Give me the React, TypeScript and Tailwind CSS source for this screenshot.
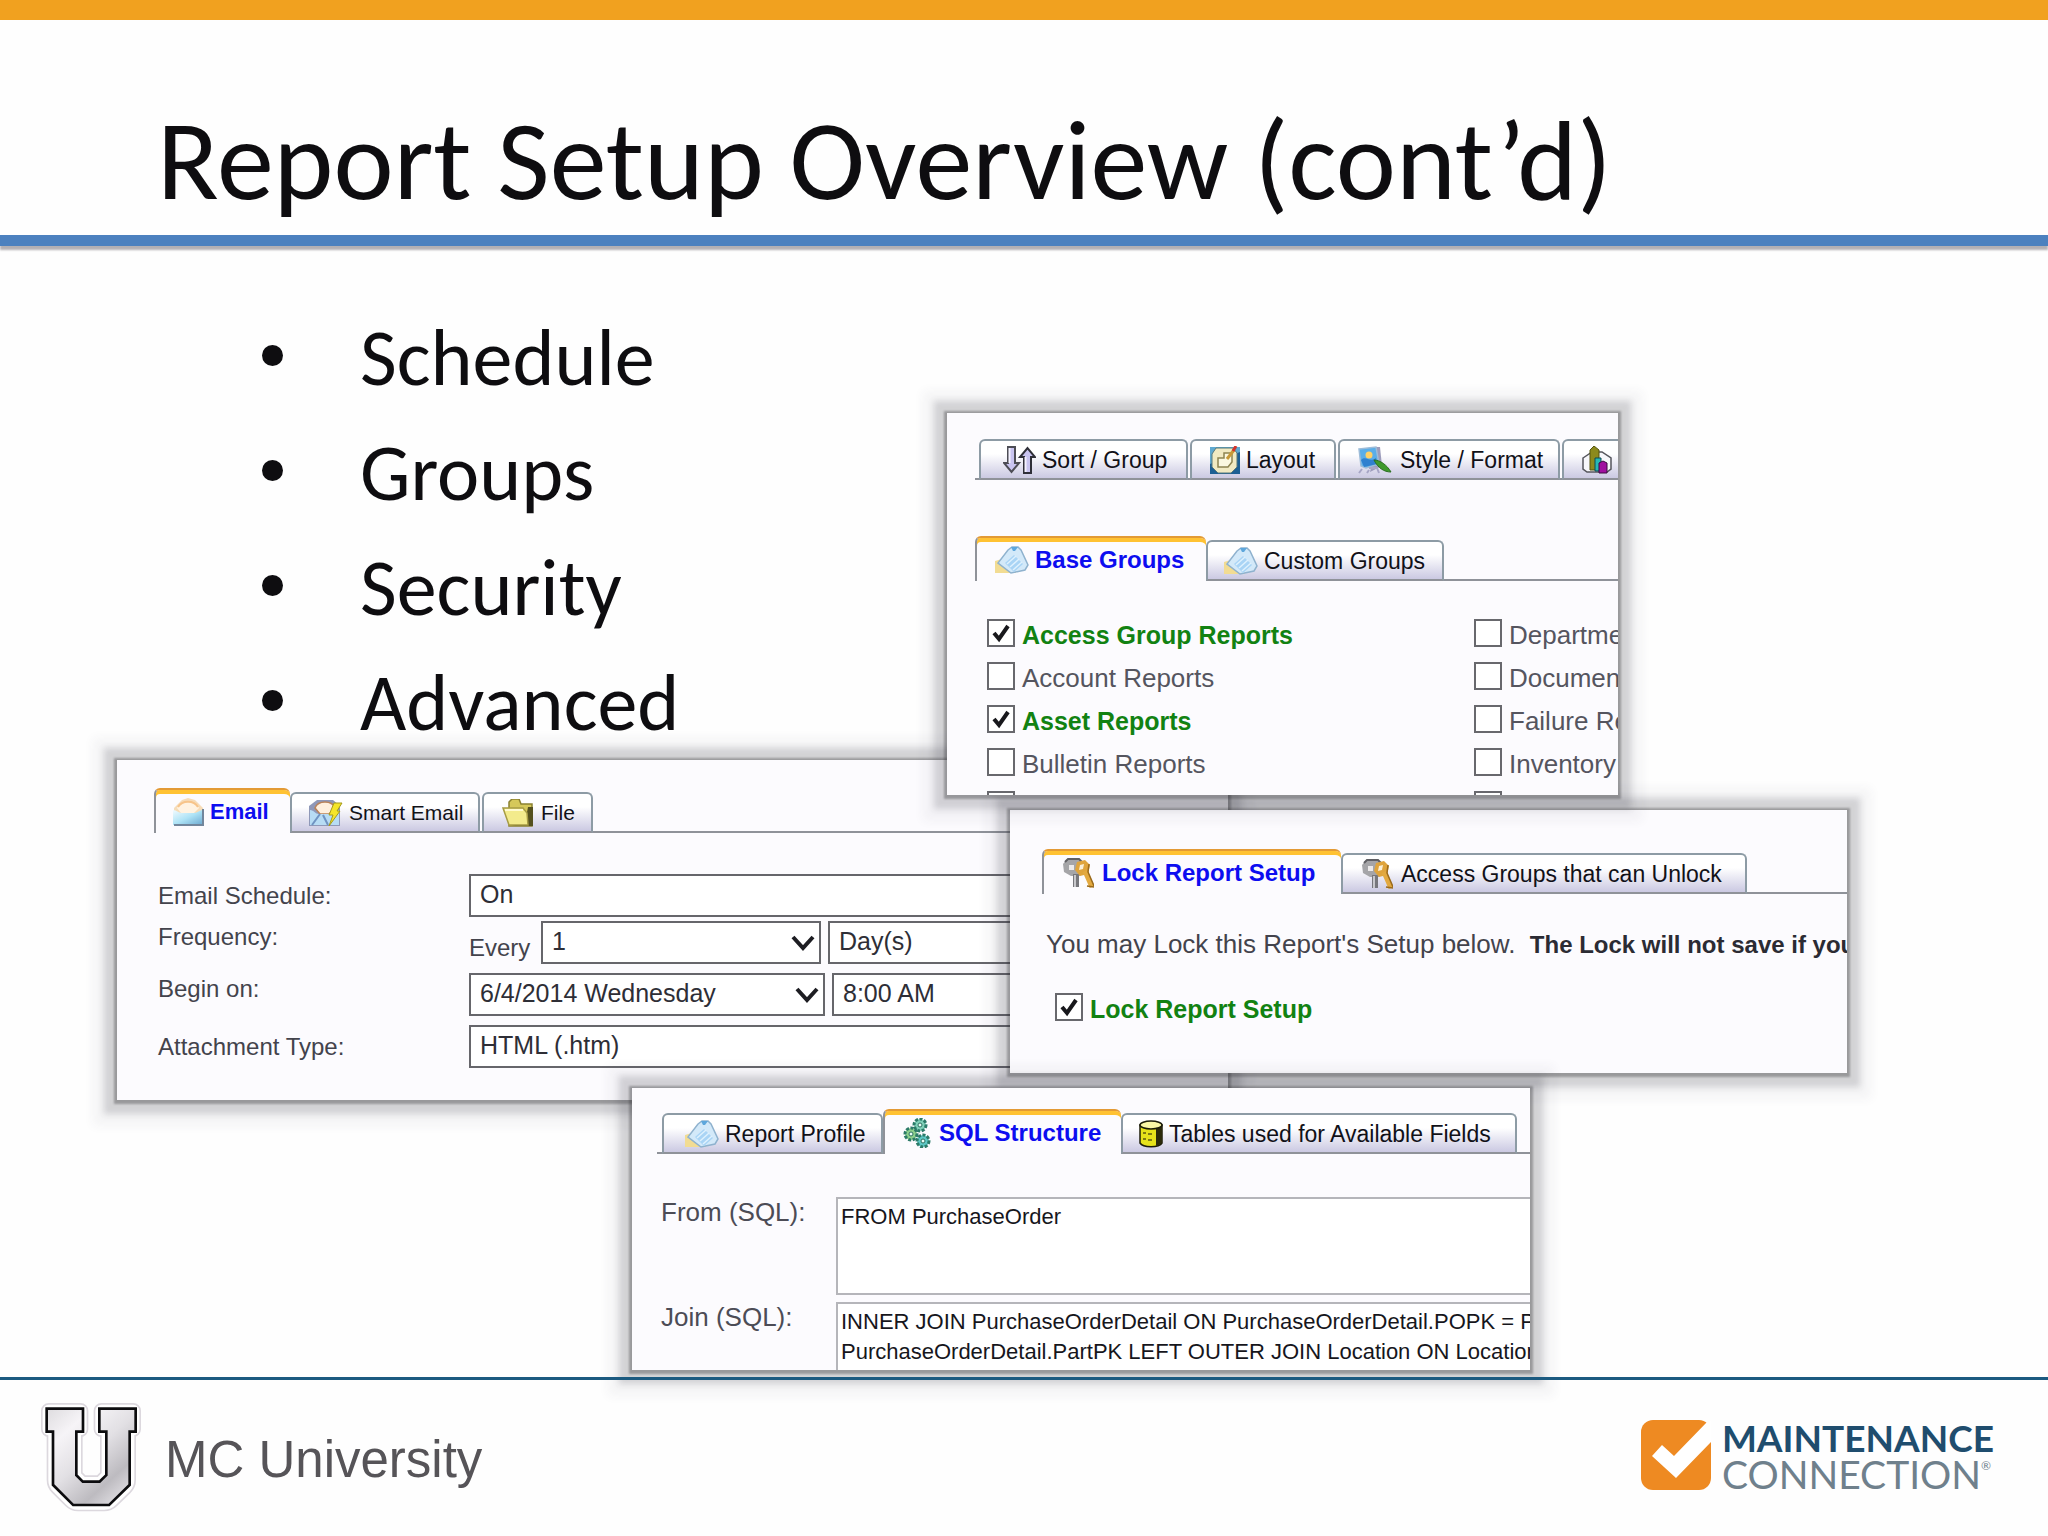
import type { ReactNode } from 'react'
import { clsx } from 'clsx'

/* ---------- icons ---------- */

function SortIcon() {
  return (
    <svg viewBox="0 0 33 28" className="h-7 w-[33px] shrink-0" aria-hidden="true">
      <path d="M5 1h7v16h4l-7.500 9L1 17h4z" fill="#c9c4f0" stroke="#4d4d55" strokeWidth="2" />
      <path d="M6.500 2v15" stroke="#f4f2ff" strokeWidth="2" />
      <path d="M21 27h7V11h4l-7.500-9L17 11h4z" fill="#c9c4f0" stroke="#2f2f38" strokeWidth="2" />
      <path d="M22.500 26V11" stroke="#f4f2ff" strokeWidth="2" />
    </svg>
  )
}

function LayoutIcon() {
  return (
    <svg viewBox="0 0 30 28" className="h-7 w-[30px] shrink-0" aria-hidden="true">
      <rect x="0" y="1" width="30" height="27" fill="#5fa9d0" />
      <path d="M0 18v10h30V6z" fill="#1d5f93" />
      <path d="M6 2h17l4 5v14l-6 6H8l-6-6V8z" fill="#f1eac2" stroke="#57787c" strokeWidth="1" />
      <path d="M8 12h6V7h8v9l-4 5H8z" fill="#fbf8e0" stroke="#8d8450" strokeWidth="1.500" />
      <path d="M17 13 24 4" stroke="#c79a38" strokeWidth="3" />
      <path d="m23 5 3-5" stroke="#d1342b" strokeWidth="3" />
    </svg>
  )
}

function StyleIcon() {
  return (
    <svg viewBox="0 0 34 28" className="h-7 w-[34px] shrink-0" aria-hidden="true">
      <path d="M18 1h4l2 19-12 6z" fill="#9c9cbb" />
      <path d="m1 3 17-2 3 17-13 4-5-2z" fill="#5aaee8" stroke="#9dbcd8" strokeWidth="1.500" />
      <path d="M3 14c5-5 8 3 15-2l1 6-13 3z" fill="#2f80cf" />
      <circle cx="11" cy="9" r="3.500" fill="#ffd166" />
      <path d="M11 22h8l2 5M1 27l3-4M9 27l2-3" stroke="#a7a6c6" strokeWidth="2" fill="none" />
      <path d="M16 14c6 0 13 5 17 12-7 0-13-4-17-12z" fill="#3f9a2c" stroke="#2a6e20" strokeWidth="1" />
    </svg>
  )
}

function ChartIcon() {
  return (
    <svg viewBox="0 0 30 28" className="h-7 w-[30px] shrink-0" aria-hidden="true">
      <path d="M1 12 10 6h10l9 6v11l-4 3H5l-4-3z" fill="#f7f7fb" stroke="#55555c" strokeWidth="1.500" />
      <path d="M8 4 12 0l5 4v20H8z" fill="#8c8a1c" stroke="#55540f" strokeWidth="1" />
      <path d="M13 12h6v13h-6z" fill="#27b8b4" stroke="#0d4b52" strokeWidth="1" />
      <path d="M17 17l4-2 4 2v10h-8z" fill="#a010a0" stroke="#3b0a3f" strokeWidth="1" />
    </svg>
  )
}

function TagIcon() {
  return (
    <svg viewBox="0 0 34 28" className="h-7 w-[34px] shrink-0" aria-hidden="true">
      <path d="M0 15 7 13l14 13v1H0z" fill="#f2dc93" />
      <path d="M13 4 17 1h6l3 3 7 15-3 5-14 3L3 17z" fill="#d3e9f9" stroke="#8fb2ce" strokeWidth="1.500" />
      <path d="m10 17 9-8 9 9-9 8z" fill="#a9d4f5" />
      <path d="m12 18 9-8M15 21l9-8M18 24l9-8" stroke="#dff1fd" strokeWidth="1.500" />
      <path d="M16 1h7l-3 4h-2z" fill="#5ea7dc" />
    </svg>
  )
}

function MailIcon() {
  return (
    <svg viewBox="0 0 32 28" className="h-7 w-8 shrink-0" aria-hidden="true">
      <defs>
        <linearGradient id="mailBody" x1="0" y1="0" x2="1" y2="1">
          <stop offset="0" stopColor="#f2fbff" />
          <stop offset="0.500" stopColor="#aee3f6" />
          <stop offset="1" stopColor="#6aa7cf" />
        </linearGradient>
      </defs>
      <path d="M2 10 10 2l6-2 7 2 8 8v17H2z" fill="#f6dcb8" />
      <path d="M5 10C9 2 23 2 27 10l-5 5H9z" fill="#fff3e2" />
      <path d="M6 9c4-7 16-7 20 0" fill="none" stroke="#f7c48a" strokeWidth="2" />
      <path d="M1 12c4 0 5 3 9 3h12c4 0 5-3 9-3v15H1z" fill="url(#mailBody)" />
      <path d="M31 11v16H2" fill="none" stroke="#72869c" strokeWidth="2" />
    </svg>
  )
}

function SmartMailIcon() {
  return (
    <svg viewBox="0 0 35 28" className="h-7 w-[35px] shrink-0" aria-hidden="true">
      <path d="M1 7 9 1h16l7 6v20H1z" fill="#8f98b8" />
      <path d="M7 9c3-8 17-8 20 0l-6 6h-9z" fill="#fff0de" stroke="#b9835a" strokeWidth="1.500" />
      <path d="M2 11c4 0 5 4 9 4h11c4 0 5-4 9-4v15H2z" fill="#b7dcf4" />
      <path d="m4 26 8-11M20 26l-5-10" fill="none" stroke="#6f93c2" strokeWidth="2" />
      <path d="M26 4h8l-5 8h3L21 27l4-11h-4z" fill="#f5e52a" stroke="#a59a1c" strokeWidth="1" />
    </svg>
  )
}

function FolderIcon() {
  return (
    <svg viewBox="0 0 33 28" className="h-7 w-[33px] shrink-0" aria-hidden="true">
      <path d="M7 3 10 0h7l2 5h11v22H7z" fill="#d5c85a" stroke="#8b8130" strokeWidth="1.500" />
      <path d="M26 8h5v19H9l14-3z" fill="#55511f" />
      <path d="M1 9h20l4 5 1 12H7z" fill="#f3eb8c" stroke="#a79c45" strokeWidth="1.500" />
      <path d="M3 11h18" stroke="#fffbd0" strokeWidth="2" />
    </svg>
  )
}

function KeysIcon() {
  return (
    <svg viewBox="0 0 32 30" className="h-[30px] w-8 shrink-0" aria-hidden="true">
      <path d="M5 1h12l4 4-3 13H9L2 14 1 6z" fill="#a5a5a8" />
      <path d="M3 4 6 1h11l3 3" fill="none" stroke="#5f5f63" strokeWidth="2" />
      <path d="M7 7h5v5H7z" fill="#eceaea" />
      <path d="M14 16v13" stroke="#77777c" strokeWidth="6" />
      <path d="M13 17v12" stroke="#c8c8cc" strokeWidth="2" />
      <path d="m15 4 8-2 5 5-2 9-8 2-5-6z" fill="#dfa43c" />
      <path d="m18 7 4-1-1 5-4 1z" fill="#fbf0d8" />
      <path d="m23 13 7 16" stroke="#e3a93f" strokeWidth="5" />
      <path d="m25 28 7 1M27 6l-1 8 6 14" fill="none" stroke="#9a6a1c" strokeWidth="1.500" />
    </svg>
  )
}

function GearsIcon() {
  return (
    <svg viewBox="0 0 28 30" className="h-[30px] w-7 shrink-0" aria-hidden="true">
      <g fill="#7fd0b8" stroke="#2c7a68" strokeWidth="3" strokeDasharray="3 1.500">
        <circle cx="17" cy="7" r="6" />
        <circle cx="8" cy="16" r="6" fill="#8ccf8c" />
        <circle cx="20" cy="23" r="6" fill="#5cc7c4" />
      </g>
      <g fill="#e9fff7" stroke="#2c6f60" strokeWidth="1">
        <circle cx="17" cy="7" r="2" />
        <circle cx="8" cy="16" r="2" />
        <circle cx="20" cy="23" r="2" />
      </g>
    </svg>
  )
}

function DatabaseIcon() {
  return (
    <svg viewBox="0 0 24 28" className="h-7 w-6 shrink-0" aria-hidden="true">
      <path d="M1 5v18c3 5 19 5 22 0V5z" fill="#e6e21a" stroke="#1c1c08" strokeWidth="1.500" />
      <path d="M17 8v18c3-1 6-2 6-4V5z" fill="#2b2a0a" />
      <ellipse cx="12" cy="5" rx="11" ry="4" fill="#faf7a6" stroke="#1c1c08" strokeWidth="1.500" />
      <path d="M4 13h3M9 14h4M4 19h3M9 20h4" stroke="#7f7c12" strokeWidth="2" />
    </svg>
  )
}

/* ---------- shared pieces ---------- */

interface TabItem {
  label: string
  icon: ReactNode
  className: string
  active?: boolean
}

function TabBar({ tabs, small, className }: { tabs: TabItem[]; small?: boolean; className?: string }) {
  return (
    <div role="tablist" className={clsx('flex h-[45px] items-end overflow-hidden shadow-[inset_0_-2px_0_#8f9299]', className)}>
      {tabs.map((tab, i) => (
        <button
          key={i}
          type="button"
          role="tab"
          aria-selected={!!tab.active}
          aria-label={tab.label || 'Chart'}
          className={clsx(
            'flex shrink-0 items-center whitespace-nowrap rounded-t-md leading-7',
            tab.active
              ? 'h-[45px] border-t-2 border-l-2 border-t-[#e39a35] border-l-[#8f9299] bg-[#fcfbfe] font-bold text-[#0d0df0] shadow-[inset_0_4px_0_#ffc233]'
              : 'h-[41px] border-2 border-[#8d9ba5] border-b-[#8f9299] bg-linear-to-b from-white from-35% to-[#cbc9e2] text-[#111118]',
            small ? (tab.active ? 'text-[22px]' : 'text-[21px]') : tab.active ? 'text-[24px]' : 'text-[23px]',
            tab.className,
          )}
        >
          {tab.icon}
          {tab.label}
        </button>
      ))}
    </div>
  )
}

function Panel({ className, label, children }: { className: string; label: string; children: ReactNode }) {
  return (
    <section
      aria-label={label}
      className={clsx(
        'absolute bg-[#fcfbfe] shadow-[0_1px_2px_3px_rgba(40,40,45,0.34),0_1px_6px_13px_rgba(60,60,70,0.18),0_2px_10px_24px_rgba(60,60,80,0.05)]',
        className,
      )}
    >
      <div className="h-full overflow-hidden">{children}</div>
    </section>
  )
}

function CheckItem({ label, checked, className }: { label: string; checked?: boolean; className?: string }) {
  return (
    <label className={clsx('flex items-start whitespace-nowrap', className)}>
      <span className="relative h-7 w-7 shrink-0">
        <input
          type="checkbox"
          aria-label={label || 'Report group'}
          defaultChecked={checked}
          className="block h-7 w-7 appearance-none border-2 border-[#68686d] bg-white"
        />
        {checked && (
          <svg viewBox="0 0 28 28" className="pointer-events-none absolute inset-0 h-7 w-7" aria-hidden="true">
            <path d="m7 14 5 6 9-13" fill="none" stroke="#18181c" strokeWidth="4" />
          </svg>
        )}
      </span>
      <span className={clsx('pl-[7px] leading-8', checked ? 'text-[25px] font-bold text-[#128212]' : 'text-[26px] text-[#55555f]')}>
        {label}
      </span>
    </label>
  )
}

function SelectBox({ id, label, value, className }: { id?: string; label?: string; value: string; className?: string }) {
  return (
    <span className={clsx('relative h-[43px]', className)}>
      <select
        id={id}
        aria-label={label}
        className="block h-full w-full appearance-none border-2 border-[#66666b] bg-white pr-10 pb-1 pl-[9px] text-[25px] text-[#2e2e36]"
      >
        <option>{value}</option>
      </select>
      <svg viewBox="0 0 24 16" className="pointer-events-none absolute top-3.5 right-1.5 h-4 w-6" aria-hidden="true">
        <path d="m2 2 10 11L22 2" fill="none" stroke="#1d1d22" strokeWidth="4" />
      </svg>
    </span>
  )
}

/* ---------- panels ---------- */

const GROUP_ROWS = [
  { left: 'Access Group Reports', right: 'Department', checked: true },
  { left: 'Account Reports', right: 'Document' },
  { left: 'Asset Reports', right: 'Failure Reports', checked: true },
  { left: 'Bulletin Reports', right: 'Inventory' },
  { left: '', right: '' },
]

function GroupsPanel() {
  return (
    <Panel label="Groups" className="top-[167px] left-[947px] h-[382px] w-[671px]">
      <TabBar
        className="mt-[22px] ml-7 pl-1"
        tabs={[
          { label: 'Sort / Group', icon: <SortIcon />, className: 'mr-0.5 w-[209px] gap-1.5 pl-[22px]' },
          { label: 'Layout', icon: <LayoutIcon />, className: 'mr-0.5 w-[146px] gap-1.5 pl-[18px]' },
          { label: 'Style / Format', icon: <StyleIcon />, className: 'mr-0.5 w-[222px] gap-2 pl-[18px]' },
          { label: '', icon: <ChartIcon />, className: 'w-[120px] pl-[18px]' },
        ]}
      />
      <TabBar
        className="mt-[56px] ml-7"
        tabs={[
          { label: 'Base Groups', icon: <TagIcon />, className: 'w-[231px] gap-1.5 pl-[18px]', active: true },
          { label: 'Custom Groups', icon: <TagIcon />, className: 'w-[238px] gap-1.5 pl-4' },
        ]}
      />
      <div className="mt-[38px] ml-10 flex flex-col gap-[9px]">
        {GROUP_ROWS.map((row, i) => (
          <div key={i} className="grid h-[34px] grid-cols-[487px_1fr]">
            <CheckItem label={row.left} checked={row.checked} />
            <CheckItem label={row.right} />
          </div>
        ))}
      </div>
    </Panel>
  )
}

function EmailPanel() {
  return (
    <Panel label="Schedule" className="top-[514px] left-[117px] h-[340px] w-[1111px]">
      <TabBar
        small
        className="mt-7 ml-[37px]"
        tabs={[
          { label: 'Email', icon: <MailIcon />, className: 'w-[136px] gap-1.5 pl-4', active: true },
          { label: 'Smart Email', icon: <SmartMailIcon />, className: 'mr-0.5 w-[190px] gap-1.5 pl-4' },
          { label: 'File', icon: <FolderIcon />, className: 'w-[111px] gap-1.5 pl-[18px]' },
        ]}
      />
      <div className="mt-[41px] mr-7 ml-[41px] flex flex-col gap-[9px] text-[24px] leading-8 text-[#43434c]">
        <div className="-mb-[5px] grid grid-cols-[311px_1fr]">
          <label htmlFor="schedule" className="self-center">Email Schedule:</label>
          <SelectBox id="schedule" value="On" />
        </div>
        <div className="grid grid-cols-[311px_1fr]">
          <label htmlFor="every">Frequency:</label>
          <div className="flex">
            <span className="w-[72px] self-end">Every</span>
            <SelectBox id="every" value="1" className="mr-[7px] w-[280px]" />
            <SelectBox label="Unit" value="Day(s)" className="flex-1" />
          </div>
        </div>
        <div className="grid grid-cols-[311px_1fr]">
          <label htmlFor="begin">Begin on:</label>
          <div className="flex">
            <SelectBox id="begin" value="6/4/2014 Wednesday" className="mr-[7px] w-[356px]" />
            <SelectBox label="Time" value="8:00 AM" className="flex-1" />
          </div>
        </div>
        <div className="grid grid-cols-[311px_1fr]">
          <label htmlFor="attachment" className="self-center">Attachment Type:</label>
          <SelectBox id="attachment" value="HTML (.htm)" />
        </div>
      </div>
    </Panel>
  )
}

function LockPanel() {
  return (
    <Panel label="Security" className="top-[564px] left-[1010px] h-[263px] w-[837px]">
      <TabBar
        className="mt-[39px] ml-8"
        tabs={[
          { label: 'Lock Report Setup', icon: <KeysIcon />, className: 'w-[299px] gap-2 pl-[18px]', active: true },
          { label: 'Access Groups that can Unlock', icon: <KeysIcon />, className: 'w-[406px] gap-2 pl-[18px]' },
        ]}
      />
      <p className="mt-[34px] ml-9 whitespace-nowrap text-[26px] leading-8 text-[#43434c]">
        You may Lock this Report's Setup below.&nbsp; <b className="text-[24px] text-[#2b2b33]">The Lock will not save if you</b>
      </p>
      <CheckItem label="Lock Report Setup" checked className="mt-[32px] ml-[45px]" />
    </Panel>
  )
}

function SqlPanel() {
  return (
    <Panel label="Advanced" className="top-[842px] left-[632px] h-[282px] w-[898px]">
      <TabBar
        className="mt-[21px] ml-[25px] pl-[5px]"
        tabs={[
          { label: 'Report Profile', icon: <TagIcon />, className: 'w-[221px] gap-1.5 pl-[21px]' },
          { label: 'SQL Structure', icon: <GearsIcon />, className: 'w-[238px] gap-2 pl-[18px]', active: true },
          { label: 'Tables used for Available Fields', icon: <DatabaseIcon />, className: 'w-[396px] gap-1.5 pl-4' },
        ]}
      />
      <div className="mt-[43px] ml-[29px] grid grid-cols-[175px_1fr] gap-y-[7px] text-[26px] leading-[30px] text-[#4c4c56]">
        <label htmlFor="from">From (SQL):</label>
        <textarea
          id="from"
          defaultValue="FROM PurchaseOrder"
          className="block h-[98px] resize-none overflow-hidden border-2 border-r-0 border-[#b5b5ba] bg-white px-[3px] pt-[3px] text-[22px] leading-[30px] text-[#16161c]"
        />
        <label htmlFor="join">Join (SQL):</label>
        <textarea
          id="join"
          wrap="off"
          defaultValue={'INNER JOIN PurchaseOrderDetail ON PurchaseOrderDetail.POPK = P\nPurchaseOrderDetail.PartPK LEFT OUTER JOIN Location ON Location'}
          className="block h-[98px] resize-none overflow-hidden border-2 border-r-0 border-[#b5b5ba] bg-white px-[3px] pt-[3px] text-[22px] leading-[30px] text-[#16161c]"
        />
      </div>
    </Panel>
  )
}

/* ---------- footer ---------- */

function UniversityMark() {
  const bowl = 'M194 150V332L234 372H313L354 332V150'
  return (
    <svg viewBox="120 92 312 336" className="h-28 w-[104px]" aria-hidden="true">
      <defs>
        <linearGradient id="steel" gradientUnits="userSpaceOnUse" x1="140" y1="110" x2="400" y2="400">
          <stop offset="0" stopColor="#dcdadd" />
          <stop offset="0.250" stopColor="#f6f4f7" />
          <stop offset="0.500" stopColor="#e2e0e4" />
          <stop offset="0.750" stopColor="#bdbbc0" />
          <stop offset="1" stopColor="#f0eef2" />
        </linearGradient>
      </defs>
      <g fill="none" strokeLinejoin="round">
        <g stroke="#dcd8de">
          <path d={bowl} strokeWidth="108" />
          <path d="M146 124h96v56h-96zM304 124h96v56h-96z" strokeWidth="46" />
        </g>
        <g stroke="#ffffff">
          <path d={bowl} strokeWidth="98" />
          <path d="M146 124h96v56h-96zM304 124h96v56h-96z" strokeWidth="36" />
        </g>
      </g>
      <g stroke="#0c0c0e">
        <path d={bowl} fill="none" strokeWidth="78" />
        <path d="M140 118h109v69h-109zM298 118h109v69h-109z" strokeWidth="8" />
      </g>
      <path d={bowl} fill="none" stroke="url(#steel)" strokeWidth="62" />
      <path d="M144 122h101v61h-101zM302 122h101v61h-101z" fill="url(#steel)" />
    </svg>
  )
}

function Footer() {
  return (
    <footer className="relative flex h-[159px] items-start border-t-[3px] border-[#1b5a80] pr-[54px] pl-10">
      <div className="mt-[20px] flex items-center">
        <UniversityMark />
        <span className="pt-2 pl-[21px] text-[51px] leading-[60px] text-[#565458]">MC University</span>
      </div>
      <div className="mt-10 ml-auto flex gap-[11px]">
        <svg viewBox="0 0 70 70" className="h-[70px] w-[70px]" aria-hidden="true">
          <rect width="70" height="70" rx="12" fill="#ee8a22" />
          <path d="M11 36 21 25l12 11L66 2l4-2v22L35 58z" fill="#ffffff" />
        </svg>
        <div className="font-['Lato',sans-serif] text-[37px] leading-9">
          <div className="font-bold text-[#1f4d6e]">MAINTENANCE</div>
          <div className="flex items-start text-[39px] text-[#6f808c]">
            CONNECTION<span className="text-[12px] leading-5">®</span>
          </div>
        </div>
      </div>
    </footer>
  )
}

export default function App() {
  return (
    <div className="flex min-h-screen flex-col overflow-hidden bg-[#fefefe] font-['Liberation_Sans',Arial,sans-serif]">
      <header>
        <div className="h-5 bg-[#f1a11f]" />
        <h1 className="flex h-[215px] items-end pb-[15px] pl-[157px] font-['Carlito','Lato',sans-serif] text-[114px] leading-[120px] text-[#0e0d10]">
          Report Setup Overview (cont’d)
        </h1>
        <div className="h-[11px] bg-[#4c81bf] shadow-[0_4px_2px_#b3b0b4]" />
      </header>
      <main className="relative flex-1">
        <ul className="pt-[54px] pl-[262px] font-['Carlito','Lato',sans-serif] text-[80px] leading-[115px] text-[#0e0d10]">
          {['Schedule', 'Groups', 'Security', 'Advanced'].map(item => (
            <li key={item} className="flex items-center">
              <span className="mr-[77px] mb-1 h-[21px] w-[21px] rounded-full bg-[#0e0d10]" />
              {item}
            </li>
          ))}
        </ul>
        <EmailPanel />
        <LockPanel />
        <GroupsPanel />
        <SqlPanel />
      </main>
      <Footer />
    </div>
  )
}
